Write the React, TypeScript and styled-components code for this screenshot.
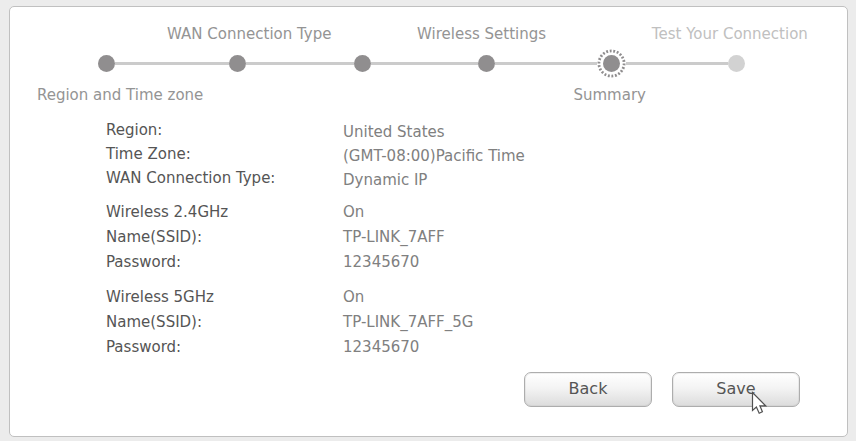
import React from "react";
import styled, { createGlobalStyle } from "styled-components";

const GlobalStyle = createGlobalStyle`
  * { box-sizing: border-box; }
  body {
    margin: 0;
    background: #ececec;
    font-family: Verdana, "DejaVu Sans", sans-serif;
    font-size: 15px;
    color: #555;
  }
`;

const Page = styled.div`
  padding: 6px 8px 4px 9px;
`;

const Panel = styled.main`
  border: 1px solid #c0c0c0;
  border-radius: 5px;
  background: #fff;
  padding: 17px 0 29px;
`;

const Stepper = styled.nav`
  color: #8e8e8e;
`;

const TopLabels = styled.div`
  display: grid;
  grid-template-columns: 138fr 202fr 262fr 234fr;
  line-height: 20px;
  text-align: center;
  white-space: nowrap;
`;

const BottomLabels = styled(TopLabels)`
  grid-template-columns: 220fr 260fr 238fr 118fr;
`;

const StepLabel = styled.span<{ $column: number; $pending?: boolean }>`
  grid-column: ${(p) => p.$column};
  color: ${(p) => (p.$pending ? "#c0c0c0" : "#949494")};
`;

const Track = styled.div`
  display: flex;
  align-items: center;
  height: 29px;
  margin: 5px 0 7px;
  padding: 0 102px 0 88px;
`;

const Dot = styled.span<{ $pending?: boolean }>`
  flex: none;
  width: 17px;
  height: 17px;
  border-radius: 50%;
  background: ${(p) => (p.$pending ? "#d2d2d2" : "#908e8f")};
`;

const Rail = styled.span<{ $span: number }>`
  flex: ${(p) => p.$span} 1 0;
  height: 3px;
  background: #cbcbcb;
`;

const CurrentDot = styled.svg`
  flex: none;
  width: 29px;
  height: 29px;
`;

const Details = styled.div`
  display: flex;
  flex-direction: column;
  gap: 10px;
  padding: 14px 0 0 96px;
`;

const Group = styled.dl<{ $lowered?: boolean }>`
  display: grid;
  grid-template-columns: 237px 1fr;
  grid-auto-rows: ${(p) => (p.$lowered ? 24 : 25)}px;
  margin: 0;
  line-height: 22px;

  dt { align-self: start; }
  dd {
    align-self: ${(p) => (p.$lowered ? "end" : "start")};
    margin: 0;
    color: #808080;
  }
`;

const Actions = styled.div`
  display: flex;
  justify-content: flex-end;
  gap: 20px;
  margin-top: 11px;
  padding-right: 47px;
`;

const Button = styled.button`
  width: 128px;
  height: 35px;
  padding: 0 0 2px;
  border: 1px solid #adadad;
  border-radius: 7px;
  background: linear-gradient(#fff, #f4f4f4 45%, #dcdcdc);
  box-shadow: inset 0 0 0 1px rgba(190, 190, 190, 0.25);
  color: #555;
  font: inherit;
  font-size: 16px;
`;

const SaveWrap = styled.div`
  position: relative;
`;

const Pointer = styled.svg`
  position: absolute;
  left: 79px;
  top: 19px;
  width: 16px;
  height: 25px;
  pointer-events: none;
`;

const groups: { lowered?: boolean; rows: [string, string][] }[] = [
  {
    lowered: true,
    rows: [
      ["Region:", "United States"],
      ["Time Zone:", "(GMT-08:00)Pacific Time"],
      ["WAN Connection Type:", "Dynamic IP"],
    ],
  },
  {
    rows: [
      ["Wireless 2.4GHz", "On"],
      ["Name(SSID):", "TP-LINK_7AFF"],
      ["Password:", "12345670"],
    ],
  },
  {
    rows: [
      ["Wireless 5GHz", "On"],
      ["Name(SSID):", "TP-LINK_7AFF_5G"],
      ["Password:", "12345670"],
    ],
  },
];

export default function App() {
  return (
    <>
      <GlobalStyle />
      <Page>
        <Panel>
          <Stepper aria-label="Setup progress">
            <TopLabels>
              <StepLabel $column={2}>WAN Connection Type</StepLabel>
              <StepLabel $column={3}>Wireless Settings</StepLabel>
              <StepLabel $column={4} $pending>Test Your Connection</StepLabel>
            </TopLabels>
            <Track>
              <Dot />
              <Rail $span={114} />
              <Dot />
              <Rail $span={108} />
              <Dot />
              <Rail $span={108} />
              <Dot />
              <Rail $span={102} />
              <CurrentDot viewBox="0 0 29 29" aria-hidden="true">
                <circle cx="14.5" cy="14.5" r="8.5" fill="#908e8f" />
                <circle
                  cx="14.5" cy="14.5" r="12.6" fill="none" stroke="#908e8f"
                  strokeWidth="2.8" pathLength="88" strokeDasharray="2.1 1.9"
                />
              </CurrentDot>
              <Rail $span={102} />
              <Dot $pending />
            </Track>
            <BottomLabels>
              <StepLabel $column={1}>Region and Time zone</StepLabel>
              <StepLabel $column={3}>Summary</StepLabel>
            </BottomLabels>
          </Stepper>
          <Details>
            {groups.map((group, i) => (
              <Group key={i} $lowered={group.lowered}>
                {group.rows.map(([term, value]) => (
                  <React.Fragment key={term}>
                    <dt>{term}</dt>
                    <dd>{value}</dd>
                  </React.Fragment>
                ))}
              </Group>
            ))}
          </Details>
          <Actions>
            <Button type="button">Back</Button>
            <SaveWrap>
              <Button type="button">Save</Button>
              <Pointer viewBox="0 0 16 25" aria-hidden="true">
                <path
                  d="M1.5 1.5V19.5L5.4 16L8.2 22.2L11.4 20.8L8.9 14.8H14.6Z"
                  fill="#fff" stroke="#505050" strokeWidth="1.2"
                />
              </Pointer>
            </SaveWrap>
          </Actions>
        </Panel>
      </Page>
    </>
  );
}
